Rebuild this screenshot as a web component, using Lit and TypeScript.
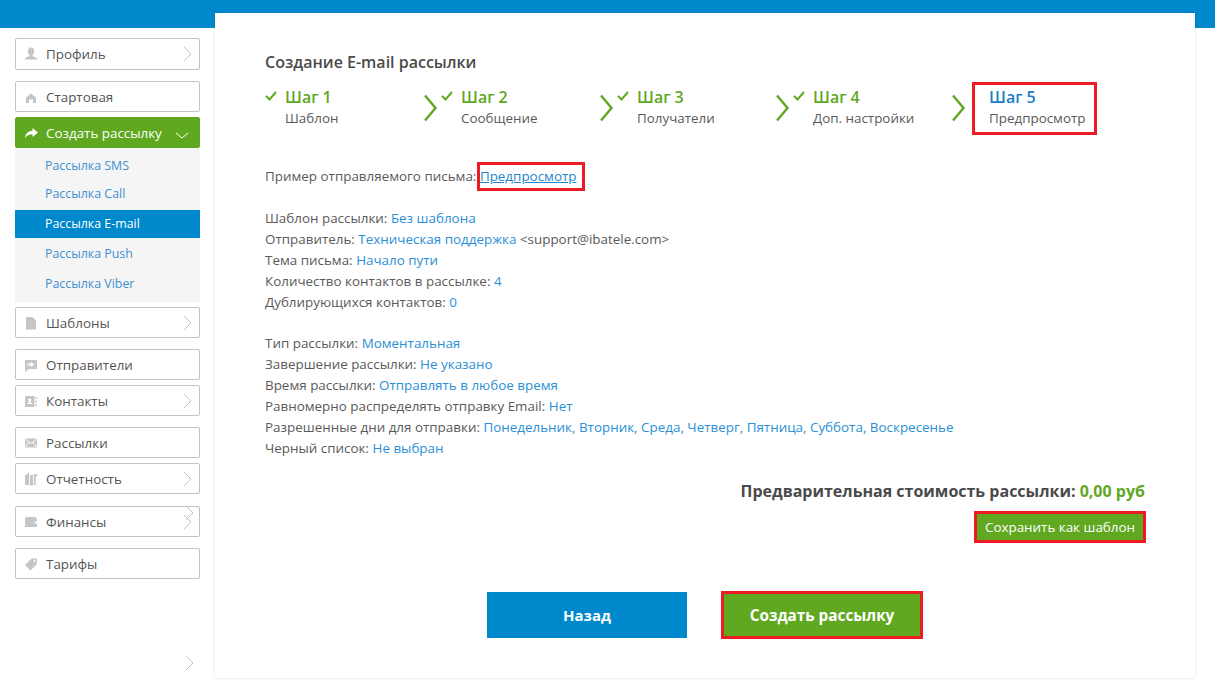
import { LitElement, html, css, svg } from "lit";
import { customElement } from "lit/decorators.js";

const ICONS: Record<string, unknown> = {
  user: svg`<path d="M7 .5c2 0 3.200 1.500 3.200 3.500S9.300 7.500 8.600 8.100v1c0 .6 4.400 1.200 4.900 3.400H.5C1 10.300 5.400 9.700 5.400 9.100v-1C4.700 7.500 3.800 6 3.800 4S5 .5 7 .5z"/>`,
  home: svg`<path d="M7 3.500l5 4V13H9V9.500H5V13H2V7.500z"/>`,
  share: svg`<path d="M8.500 2l5.500 4.500L8.500 11V8.200C5 8.200 2.800 9.300 1 12c.3-4 3-7 7.500-7.200z"/>`,
  doc: svg`<path d="M2 1h6.500L12 4.500V13.500H2z"/>`,
  chat: svg`<path d="M1 2h12v9H5l-4 3zM3.500 5.500v2H7v1.800L10 6.500 7 3.700v1.800z" fill-rule="evenodd"/>`,
  contact: svg`<path d="M1 2h9.500v11H1zM5.700 4.500c-1 0-1.600.8-1.600 1.700 0 .7.300 1.300.8 1.600v.6c-.8.300-1.800.7-2 1.700h5.600c-.2-1-1.200-1.400-2-1.700v-.6c.5-.3.800-.9.800-1.600 0-.9-.6-1.700-1.600-1.700zM11.500 3H13v2h-1.500zM11.500 6.500H13v2h-1.500zM11.500 10H13v2h-1.500z" fill-rule="evenodd"/>`,
  mail: svg`<path d="M1 2.500h12v9H1z"/><path d="M1.500 3.200L7 7.500l5.500-4.300M1.500 10.800L5 6.300M12.500 10.800L9 6.300" stroke="#fff" fill="none"/>`,
  report: svg`<path d="M1 3.500l4-3V13l-4 0zM5.800 3H9v10.500H5.800zM9.800 2H13v2.500h-1.300V13H9.800z"/>`,
  wallet: svg`<path d="M1 3.500C1 2.700 1.600 2 2.500 2H12v1.500h1V12H1zM10.500 6.500v2H13v-2z" fill-rule="evenodd"/>`,
  tag: svg`<path d="M7.500 1.500h5.500v5.500l-6.500 6.500L1 8zM10.500 3a1 1 0 100 2 1 1 0 000-2z" fill-rule="evenodd"/>`,
};

const icon = (n: string) =>
  html`<svg class="ico" viewBox="0 0 14 14" width="14" height="14">${ICONS[n]}</svg>`;

const chev = (cls = "mchev") =>
  html`<svg class=${cls} viewBox="0 0 9 16" width="9" height="16"><path d="M1 1l7 7-7 7"/></svg>`;

const item = (name: string, label: string, arrow: boolean, cls: string) => html`
  <div class="mi ${cls}">
    <span class="ib">${icon(name)}</span><span class="ml">${label}</span>${arrow ? chev() : null}
  </div>`;

@customElement("app-root")
export class AppRoot extends LitElement {
  static styles = css`
    :host { display: block; width: 1215px; height: 680px; position: relative; overflow: hidden; background: #fff;
      font-family: "Open Sans", sans-serif; font-size: 13px; color: #4a4a4a; }
    .topbar { position: absolute; left: 0; top: 0; width: 100%; height: 28px; background: #0088cc; }
    .page { position: relative; display: flex; height: 680px; box-sizing: border-box; padding-top: 13px; }
    .side { width: 215px; box-sizing: border-box; padding: 25px 15px 0; flex: none; position: relative; }
    .mi { position: relative; height: 31px; box-sizing: border-box; border: 1px solid #c3c3c3; border-radius: 2px;
      display: flex; align-items: center; padding-left: 7px; font-size: 13.4px; color: #555; background: #fff; }
    .ib { width: 16px; display: flex; justify-content: center; margin-right: 7px; }
    .ico { fill: #c6c6c6; }
    .mchev { position: absolute; right: 7px; top: 7px; fill: none; stroke: #c3c3c3; stroke-width: 1; }
    .h32 { height: 32px; }
    .active { background: #5fa81f; border-color: #5fa81f; color: #fff; }
    .active .ico { fill: #fff; }
    .down { position: absolute; right: 10px; top: 14px; fill: none; stroke: #fff; stroke-width: 1; }
    .mt11 { margin-top: 11px; }
    .mt12 { margin-top: 12px; }
    .mt5 { margin-top: 5px; }
    .sub { background: #f5f5f5; width: 185px; height: 154px; padding-top: 4px; box-sizing: border-box; margin-bottom: 5px;
      display: flex; flex-direction: column; gap: 2px; }
    .sub div { height: 28px; line-height: 28px; padding-left: 30px; font-size: 12.4px; color: #3d8fd1; }
    .sub div:nth-child(2) { margin-top: -2px; }
    .sub .on { background: #0088cc; color: #fff; }
    .stray { position: absolute; fill: none; stroke: #c3c3c3; stroke-width: 1; }
    .s-a { left: 185px; top: 492px; }
    .s-b { left: 185px; top: 642px; }
    .card { position: relative; width: 980px; height: 665px; background: #fff; box-sizing: border-box;
      box-shadow: 0 0 3px rgba(0,0,0,.14); padding: 39px 50px 0; flex: none; }
    h1 { margin: 0; font-size: 16px; line-height: 20px; font-weight: 600; color: #4a4a4a; }
    .steps { display: flex; margin-top: 13px; height: 50px; }
    .step { width: 176px; flex: none; display: flex; position: relative; box-sizing: border-box; }
    .chk { width: 12px; height: 10px; margin: 6px 8px 0 0; flex: none; fill: none; stroke: #5fa81f; stroke-width: 2; }
    .st { font-size: 16px; line-height: 24px; font-weight: 600; color: #5fa81f; }
    .sd { font-size: 13.4px; line-height: 18px; color: #5a5a5a; }
    .arrow { position: absolute; left: 159px; top: 9px; fill: none; stroke: #5fa81f; stroke-width: 2.4; }
    .cur { padding-left: 20px; }
    .cur .st { color: #1a7fc8; }
    .curbox { position: absolute; left: 3px; top: -3px; width: 125px; height: 53px; box-sizing: border-box; border: 3px solid #ed1c24; pointer-events: none; }
    .txt { font-size: 13.42px; line-height: 21px; color: #5a5a5a; white-space: nowrap; }
    .txt span { color: #2b8fd6; }
    .s1 { margin-top: 31px; }
    .s2 { margin-top: 21px; }
    .s3 { margin-top: 20px; }
    .txt .link { color: #1f86cc; text-decoration: underline; position: relative; }
    .linkbox { position: absolute; left: -3px; top: -5px; width: 108px; height: 29px; box-sizing: border-box; border: 3px solid #ed1c24; }
    .price { text-align: right; margin: 21px 0 0; font-size: 16px; line-height: 22px; font-weight: 700; color: #4a4a4a; }
    .price span { color: #5fa81f; }
    .savew { display: flex; justify-content: flex-end; margin: 9px -1px 0 0; }
    .save { width: 172px; height: 32px; box-sizing: border-box; background: #5fa81f; border: 3px solid #ed1c24; color: #fff;
      font-size: 13.4px; display: flex; align-items: center; justify-content: center; }
    .btns { display: flex; margin-top: 48px; padding-left: 222px; gap: 34px; align-items: center; }
    .back, .go { display: flex; align-items: center; justify-content: center; color: #fff; font-weight: 700; box-sizing: border-box; }
    .back { width: 200px; height: 46px; background: #0088cc; font-size: 15px; }
    .go { width: 202px; height: 48px; background: #5fa81f; border: 3px solid #ed1c24; font-size: 15.3px; }
  `;

  render() {
    return html`
      <div class="topbar"></div>
      <div class="page">
        <aside class="side">
          ${item("user", "Профиль", true, "h32")}
          <div class="mt11"></div>
          ${item("home", "Стартовая", false, "")}
          <div class="mi active mt5">
            <span class="ib">${icon("share")}</span><span class="ml">Создать рассылку</span>
            <svg class="down" viewBox="0 0 14 7" width="14" height="7"><path d="M1 1l6 5 6-5"/></svg>
          </div>
          <div class="sub">
            <div>Рассылка SMS</div>
            <div>Рассылка Call</div>
            <div class="on">Рассылка E-mail</div>
            <div>Рассылка Push</div>
            <div>Рассылка Viber</div>
          </div>
          ${item("doc", "Шаблоны", true, "")}
          <div class="mt11"></div>
          ${item("chat", "Отправители", false, "")}
          <div class="mt5"></div>
          ${item("contact", "Контакты", true, "")}
          <div class="mt11"></div>
          ${item("mail", "Рассылки", false, "")}
          <div class="mt5"></div>
          ${item("report", "Отчетность", true, "")}
          <div class="mt12"></div>
          ${item("wallet", "Финансы", true, "")}
          <div class="mt11"></div>
          ${item("tag", "Тарифы", false, "")}
          <svg class="stray s-a" viewBox="0 0 9 16" width="9" height="16"><path d="M1 1l7 7-7 7"/></svg>
          <svg class="stray s-b" viewBox="0 0 9 16" width="9" height="16"><path d="M1 1l7 7-7 7"/></svg>
        </aside>
        <main class="card">
          <h1>Создание E-mail рассылки</h1>
          <div class="steps">
            ${[["1", "Шаблон"], ["2", "Сообщение"], ["3", "Получатели"], ["4", "Доп. настройки"]].map(
              ([n, d]) => html`
                <div class="step">
                  <svg class="chk" viewBox="0 0 12 10"><path d="M1 5l3.500 3.500L11 1"/></svg>
                  <div><div class="st">Шаг ${n}</div><div class="sd">${d}</div></div>
                  <svg class="arrow" viewBox="0 0 14 28" width="14" height="28"><path d="M1 1.500l10.500 12.500L1 26.500"/></svg>
                </div>`
            )}
            <div class="step cur">
              <div><div class="st">Шаг 5</div><div class="sd">Предпросмотр</div></div>
              <div class="curbox"></div>
            </div>
          </div>
          <div class="txt s1">Пример отправляемого письма: <span class="link">Предпросмотр<i class="linkbox"></i></span></div>
          <div class="s2">
            <div class="txt">Шаблон рассылки: <span>Без шаблона</span></div>
            <div class="txt">Отправитель: <span>Техническая поддержка</span> &lt;support@ibatele.com&gt;</div>
            <div class="txt">Тема письма: <span>Начало пути</span></div>
            <div class="txt">Количество контактов в рассылке: <span>4</span></div>
            <div class="txt">Дублирующихся контактов: <span>0</span></div>
          </div>
          <div class="s3">
            <div class="txt">Тип рассылки: <span>Моментальная</span></div>
            <div class="txt">Завершение рассылки: <span>Не указано</span></div>
            <div class="txt">Время рассылки: <span>Отправлять в любое время</span></div>
            <div class="txt">Равномерно распределять отправку Email: <span>Нет</span></div>
            <div class="txt">Разрешенные дни для отправки: <span>Понедельник, Вторник, Среда, Четверг, Пятница, Суббота, Воскресенье</span></div>
            <div class="txt">Черный список: <span>Не выбран</span></div>
          </div>
          <div class="price">Предварительная стоимость рассылки: <span>0,00 руб</span></div>
          <div class="savew"><div class="save">Сохранить как шаблон</div></div>
          <div class="btns">
            <div class="back">Назад</div>
            <div class="go">Создать рассылку</div>
          </div>
        </main>
      </div>
    `;
  }
}
